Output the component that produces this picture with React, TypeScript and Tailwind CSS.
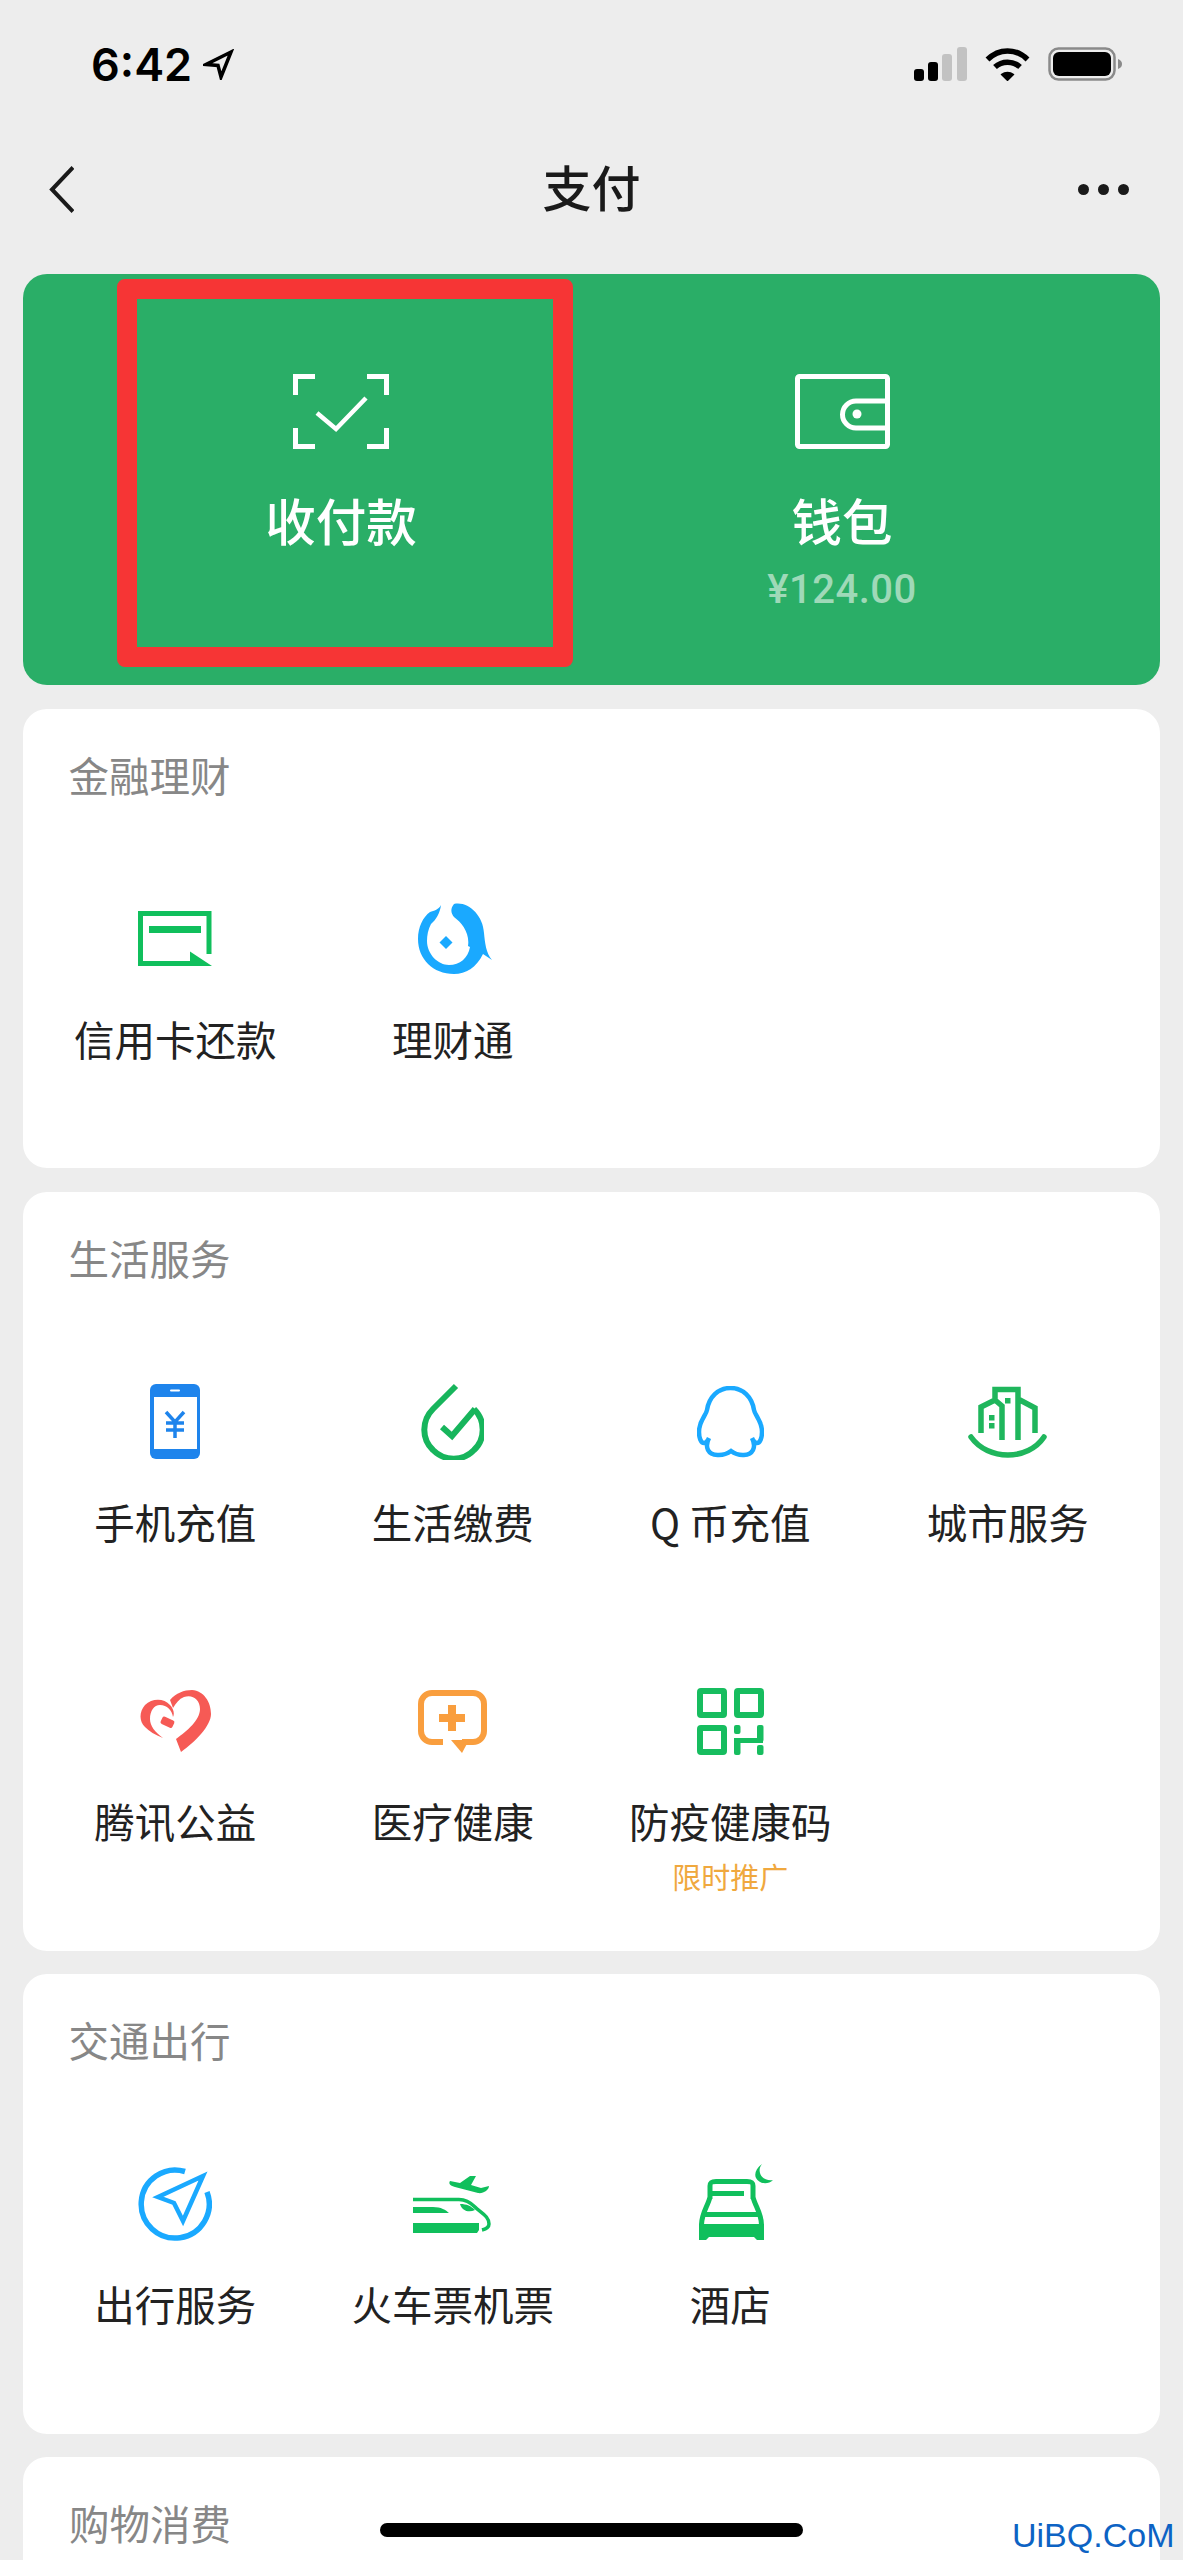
import React from 'react';

const GREEN = '#10bf5c';
const BLUE = '#1aa9ff';

const CardIcon = () => (
  <svg width="74" height="55" viewBox="0 0 74 55">
    <path d="M71 43V2.500H2.500V52.500H54" fill="none" stroke={GREEN} strokeWidth="5" />
    <path d="M11 15h52v7H11zM52 40.500L74 55H52z" fill={GREEN} />
  </svg>
);

const FishIcon = () => (
  <svg width="74" height="71" viewBox="0 0 74 71" fill={BLUE} className="ml-1">
    <path d="M36 1C50-2 65 12 66 30C67 40 68 50 74 57L65 51C58 65 48 71 36 71C15 71 0 56 0 36C0 24 5 14 12 9C16 8 21 6 23 2C22 10 18 17 13 21C10 27 9 32 9 38C9 51 20 62 31 62C42 62 50 55 52 44L50 43C52 30 44 20 36 14C33 10 32 6 36 1Z" />
    <path d="M28 33l6.500 6.500L28 46l-6.500-6.500z" />
  </svg>
);

const PhoneIcon = () => (
  <svg width="50" height="75" viewBox="0 0 50 75">
    <rect width="50" height="75" rx="6" fill="#1e84ec" />
    <rect x="4" y="13" width="43" height="52" fill="#fff" />
    <rect x="20" y="5.500" width="10" height="2" rx="1" fill="#fff" />
    <path d="M16 28L25 38L34 28M16 39H34M16 46H34M25 38V54" fill="none" stroke="#1e84ec" strokeWidth="3.500" />
  </svg>
);

const DropIcon = () => (
  <svg width="63" height="77" viewBox="0 0 63 77" fill="none" stroke="#17b55c" strokeWidth="6">
    <path d="M35 3L12 26A29 29 0 1 0 53 26" />
    <path d="M21 44L31 53L54 26" />
  </svg>
);

const PenguinIcon = () => (
  <svg width="67" height="72" viewBox="0 0 67 72" fill="none" stroke={BLUE} strokeWidth="4.500">
    <path d="M33.500 2C46 2 55 11 57 24C58 30 65 34 65 46C65 52 63 57 60 57C58 57 56 54 55 52C57 56 58 60 56 64C53 70 42 71 34 65C26 71 14 70 11 64C9 60 10 56 12 52C11 54 9 57 7 57C4 57 2 52 2 46C2 34 9 30 10 24C12 11 21 2 33.500 2Z" />
  </svg>
);

const CityIcon = () => (
  <svg width="79" height="72" viewBox="0 0 79 72" fill="none" stroke="#1fb65c" strokeWidth="5.500">
    <path d="M3 51C20 75 60 75 76 51" strokeLinecap="round" />
    <path d="M13 47V21L27 14V3.500H50V54M27 14L34 20V54M50 13L67 22V47" />
    <path d="M37 12h5.500v5.500h-5.500zM21 29h5.500v5.500h-5.500zM21 37h5.500v5.500h-5.500z" fill="#1fb65c" stroke="none" />
  </svg>
);

const HeartIcon = () => (
  <svg width="71" height="62" viewBox="0 0 71 62" fill="#f65a55">
    <path d="M30 10C36 3 44 0 52 0C64 1 71 12 71 24C71 36 55 52 41 62L36 49C47 41 60 30 60 19C60 9 52 4 44 7C39 9 36 13 33 18Z" />
    <path d="M30 15C24 8 12 8 5 15C-1 22 -1 31 5 37C9 41 15 45 23 48C15 42 10 36 10 29C10 21 14 15 20 15C27 15 32 20 33 27C35 23 33 18 30 15Z" />
    <rect x="21" y="28" width="13" height="8" rx="2" transform="rotate(25 27 32)" />
  </svg>
);

const MedicalIcon = () => (
  <svg width="69" height="63" viewBox="0 0 69 63" fill="#f99e3e">
    <path d="M25 52H14A11 11 0 0 1 3 41V14A11 11 0 0 1 14 3H55A11 11 0 0 1 66 14V41A11 11 0 0 1 55 52H44" fill="none" stroke="#f99e3e" strokeWidth="6" />
    <path d="M33 50H51L44 63Z" />
    <path d="M30 15h8v9h9v8h-9v9h-8v-9h-9v-8h9z" />
  </svg>
);

const QrIcon = () => (
  <svg width="67" height="67" viewBox="0 0 67 67" fill="#17bd5f">
    <g fill="none" stroke="#17bd5f" strokeWidth="6">
      <rect x="3" y="3" width="24" height="24" rx="1" />
      <rect x="40" y="3" width="24" height="24" rx="1" />
      <rect x="3" y="40" width="24" height="24" rx="1" />
    </g>
    <rect x="37" y="37" width="6.500" height="9" rx="2" />
    <rect x="37" y="50" width="6.500" height="17" rx="2" />
    <rect x="60" y="37" width="6.500" height="17" rx="2" />
    <rect x="60" y="57" width="6.500" height="10" rx="2" />
    <rect x="37" y="50" width="29" height="5" />
  </svg>
);

const CompassIcon = () => (
  <svg width="74" height="74" viewBox="0 0 74 74" fill="none" stroke={BLUE}>
    <path d="M47 4.500A34 34 0 1 0 69 25" strokeWidth="5.500" />
    <path d="M65 9L20 30L36 36L45 54Z" strokeWidth="4.500" />
  </svg>
);

const TrainIcon = () => (
  <svg width="79" height="57" viewBox="0 0 79 57" fill={GREEN}>
    <path d="M37 5L47 7L57 0L63 0L58 9L68 12L76 10C76 14 70 18 65 17L42 11C38 10 35 8 37 5Z" />
    <path d="M0 23.500H46C53 23.500 57 26 62 31C68 37 76 40 76 48C76 51 73 53 69 54" fill="none" stroke={GREEN} strokeWidth="3.500" />
    <path d="M0 31H20C28 31 33 34 36 37H0ZM47 28C54 28 58 30 62 34C56 37 49 35 47 28ZM0 47H66V54L64 57H0Z" />
  </svg>
);

const BedIcon = () => (
  <svg width="74" height="76" viewBox="0 0 74 76" fill={GREEN} className="-mt-1 ml-3">
    <path d="M63 0C57 4 55 10 57 14C60 20 69 21 74 16C68 17 62 14 61 9C60 5 61 3 63 0Z" />
    <path d="M11 35V22C11 18 13 17.500 17 17.500H48C52 17.500 54 18 54 22V35M11 33C9 42 2 50 2.500 62M54 33C56 42 63 50 62.500 62M6 50.500H59" fill="none" stroke={GREEN} strokeWidth="5" />
    <path d="M13 27h32v5H13zM0 60H65V76H58L55 73H10L7 76H0Z" />
  </svg>
);

type ServiceItem = { label: string; icon: React.ReactNode; note?: string };

const sections: { title: string; items: ServiceItem[] }[] = [
  {
    title: '金融理财',
    items: [
      { label: '信用卡还款', icon: <CardIcon /> },
      { label: '理财通', icon: <FishIcon /> },
    ],
  },
  {
    title: '生活服务',
    items: [
      { label: '手机充值', icon: <PhoneIcon /> },
      { label: '生活缴费', icon: <DropIcon /> },
      { label: 'Q 币充值', icon: <PenguinIcon /> },
      { label: '城市服务', icon: <CityIcon /> },
      { label: '腾讯公益', icon: <HeartIcon /> },
      { label: '医疗健康', icon: <MedicalIcon /> },
      { label: '防疫健康码', icon: <QrIcon />, note: '限时推广' },
    ],
  },
  {
    title: '交通出行',
    items: [
      { label: '出行服务', icon: <CompassIcon /> },
      { label: '火车票机票', icon: <TrainIcon /> },
      { label: '酒店', icon: <BedIcon /> },
    ],
  },
];

const StatusBar = () => (
  <div className="flex h-[128px] items-center justify-between pl-[91px] pr-[60px]">
    <div className="flex items-center gap-[11px] text-black">
      <span className="font-['Inter',sans-serif] text-[45px] font-semibold leading-none">6:42</span>
      <svg width="31" height="31" viewBox="0 0 31 31" fill="none" stroke="#000" strokeWidth="3.500">
        <path d="M28 3L3 15.500L15 16.500L18 28Z" />
      </svg>
    </div>
    <div className="flex items-center gap-[18px]">
      <svg width="53" height="34" viewBox="0 0 53 34">
        <rect x="0" y="22" width="10" height="12" rx="3" fill="#000" />
        <rect x="14" y="15" width="10" height="19" rx="3" fill="#000" />
        <rect x="28" y="7" width="10" height="27" rx="3" fill="#c2c2c2" />
        <rect x="43" y="0" width="10" height="34" rx="3" fill="#c2c2c2" />
      </svg>
      <svg width="45" height="33" viewBox="0 0 45 33" fill="none" stroke="#000" strokeWidth="5.500">
        <path d="M2.500 11.500C14 0 31 0 42.500 11.500" />
        <path d="M10 19C17 12.500 28 12.500 35 19" />
        <path d="M17 26.500C20 24 25 24 28 26.500L22.500 32Z" fill="#000" strokeWidth="2" />
      </svg>
      <svg width="75" height="34" viewBox="0 0 75 34">
        <rect x="1.500" y="1.500" width="65" height="31" rx="9" fill="none" stroke="#8a8a8a" strokeWidth="2.500" />
        <rect x="5" y="5" width="58" height="24" rx="6" fill="#000" />
        <path d="M70 12C73 13 74 15 74 17C74 19 73 21 70 22Z" fill="#8a8a8a" />
      </svg>
    </div>
  </div>
);

const NavBar = () => (
  <div className="grid h-[122px] grid-cols-3 items-center px-[49px]">
    <svg width="25" height="47" viewBox="0 0 25 47" fill="none" stroke="#1a1a1a" strokeWidth="4">
      <path d="M24 1.500L3 23.500L24 45.500" />
    </svg>
    <div className="pb-[6px] text-center text-[49px] font-medium leading-[60px] text-[#1a1a1a]">支付</div>
    <div className="mr-[5px] flex justify-end gap-[9px]">
      <span className="h-[11px] w-[11px] rounded-full bg-[#1a1a1a]" />
      <span className="h-[11px] w-[11px] rounded-full bg-[#1a1a1a]" />
      <span className="h-[11px] w-[11px] rounded-full bg-[#1a1a1a]" />
    </div>
  </div>
);

const PayCard = () => (
  <div className="relative flex h-[411px] justify-center rounded-[24px] bg-[#2aae67] pt-[100px] text-white">
    <div className="flex w-[501px] flex-col items-center">
      <svg width="96" height="75" viewBox="0 0 96 75" fill="none" stroke="#fff" strokeWidth="5">
        <path d="M2.500 21V2.500H22M74 2.500H93.500V21M2.500 54V72.500H22M74 72.500H93.500V54" />
        <path d="M24 39L43 55L73 24" strokeWidth="4.500" />
      </svg>
      <div className="mt-[40px] text-[50.500px] font-medium leading-[60px]">收付款</div>
    </div>
    <div className="flex w-[501px] flex-col items-center">
      <svg width="95" height="75" viewBox="0 0 95 75" fill="none" stroke="#fff" strokeWidth="5">
        <rect x="2.500" y="2.500" width="90" height="70" rx="2" />
        <path d="M93 27H61A13.500 13.500 0 0 0 61 54H93" />
        <circle cx="62" cy="40" r="4.500" fill="#fff" stroke="none" />
      </svg>
      <div className="mt-[40px] text-[50.500px] font-medium leading-[60px]">钱包</div>
      <div className="mt-[17px] font-['Roboto',sans-serif] text-[40px] font-medium leading-[48px] tracking-[0.5px] text-[#9fd9b8]">¥124.00</div>
    </div>
    {/* red annotation box drawn over the screenshot */}
    <div className="absolute left-[94px] top-[5px] h-[388px] w-[456px] rounded-[8px] border-[20px] border-[#f63535]" />
  </div>
);

const Section = ({ title, items }: { title: string; items: ServiceItem[] }) => (
  <div className="rounded-[24px] bg-white px-[13.5px] pt-[42px]">
    <div className="pl-[32px] text-[40.500px] leading-[48px] text-[#878787]">{title}</div>
    <div className="mt-[100px] grid grid-cols-4 auto-rows-[269.5px] gap-y-[30px]">
      {items.map((item) => (
        <div key={item.label} className="flex flex-col items-center">
          <div className="flex h-20 items-center justify-center">{item.icon}</div>
          <div className="mt-[36px] text-[40.500px] leading-[48px] text-[#222222]">{item.label}</div>
          {item.note && <div className="mt-[11px] text-[29px] leading-[40px] text-[#f0a83e]">{item.note}</div>}
        </div>
      ))}
    </div>
  </div>
);

export default function App() {
  return (
    <div className="relative h-[2560px] overflow-hidden bg-[#ededed] font-['Noto_Sans_CJK_SC',sans-serif]">
      <StatusBar />
      <NavBar />
      <div className="flex flex-col gap-[23.5px] px-[23px] pt-[24px]">
        <PayCard />
        {sections.map((section) => (
          <Section key={section.title} title={section.title} items={section.items} />
        ))}
        <div className="h-[300px] rounded-[24px] bg-white pl-[46px] pt-[42px] text-[40.500px] leading-[48px] text-[#878787]">购物消费</div>
      </div>
      <div className="absolute left-[380px] top-[2523px] h-[14px] w-[423px] rounded-full bg-black" />
      <div className="absolute left-[1012px] top-[2515px] font-['Liberation_Sans',sans-serif] text-[34px] leading-[40px] text-[#0d63c4]">UiBQ.CoM</div>
    </div>
  );
}
